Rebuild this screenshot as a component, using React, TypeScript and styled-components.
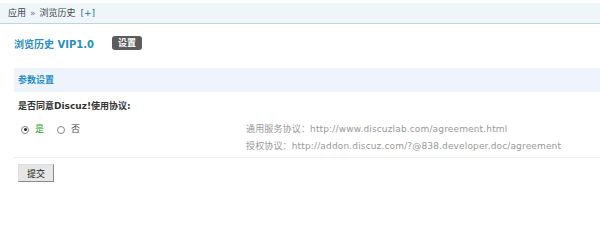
import React, { FC, useState } from 'react'
import styled, { createGlobalStyle } from 'styled-components'

const GlobalStyle = createGlobalStyle`
  body {
    margin: 0;
    background: #fff;
    font-family: "DejaVu Sans", Verdana, "Noto Sans CJK SC", sans-serif;
    font-size: 9px;
    color: #333;
  }
`

const Crumbs = styled.div`
  margin-top: 3px;
  height: 20px;
  line-height: 20px;
  padding-left: 8px;
  background: #eef6fa;
  border-bottom: 1px solid #bed5e1;
  color: #444;
`

const CrumbSep = styled.span`
  margin: 0 4px;
  color: #777;
`

const AddLink = styled.span`
  margin-left: 5px;
  color: #2b6f9a;
`

const TitleRow = styled.div`
  display: flex;
  align-items: center;
  padding: 12px 14px 0;
  height: 14px;
`

const Title = styled.h3`
  margin: 0;
  font-size: 10px;
  font-weight: bold;
  color: #2b8ec0;
`

const Badge = styled.span`
  margin-left: 18px;
  height: 14px;
  line-height: 14px;
  padding: 0 6px;
  border-radius: 3px;
  background: #5c5c5c;
  color: #fff;
  font-weight: bold;
`

const Form = styled.div`
  margin: 18px 0 0 14px;
`

const SectionHead = styled.div`
  height: 24px;
  line-height: 24px;
  padding-left: 4px;
  background: #eff4fc;
  color: #1f8fc6;
  font-weight: bold;
`

const Question = styled.div`
  height: 29px;
  line-height: 29px;
  padding-left: 4px;
  font-weight: bold;
  color: #333;
`

const OptionRow = styled.div`
  display: grid;
  grid-template-columns: 228px 1fr;
  padding: 0 0 2px 4px;
  border-bottom: 1px solid #efefef;
`

const Options = styled.div`
  display: flex;
  align-items: flex-start;
  padding-left: 3px;
  line-height: 17px;
`

const Option = styled.label`
  display: flex;
  align-items: center;
  margin-right: 13px;
  cursor: pointer;
`

const Dot = styled.span<{ $on: boolean }>`
  position: relative;
  width: 6px;
  height: 6px;
  border: 1px solid #888;
  border-radius: 50%;
  background: #fff;
  margin-right: 6px;
  &::after {
    content: '';
    display: ${p => (p.$on ? 'block' : 'none')};
    position: absolute;
    left: 1.5px;
    top: 1.5px;
    width: 3px;
    height: 3px;
    border-radius: 50%;
    background: #222;
  }
`

const OptionText = styled.span<{ $on: boolean }>`
  color: ${p => (p.$on ? '#1aa01a' : '#444')};
`

const Notes = styled.div`
  line-height: 17px;
  color: #999;
  letter-spacing: 0.15px;
`

const Submit = styled.button`
  margin: 6px 0 0 4px;
  width: 36px;
  height: 18px;
  padding: 0;
  font: inherit;
  color: #222;
  background: #e6e6e6;
  border: 1px solid;
  border-color: #ddd #888 #888 #ddd;
  cursor: pointer;
`

const App: FC = () => {
  const [agree, setAgree] = useState(true)

  return (
    <>
      <GlobalStyle />
      <Crumbs>
        应用<CrumbSep>»</CrumbSep>浏览历史<AddLink>[+]</AddLink>
      </Crumbs>
      <TitleRow>
        <Title>浏览历史 VIP1.0</Title>
        <Badge>设置</Badge>
      </TitleRow>
      <Form>
        <SectionHead>参数设置</SectionHead>
        <Question>是否同意Discuz!使用协议:</Question>
        <OptionRow>
          <Options>
            <Option onClick={() => setAgree(true)}>
              <Dot $on={agree} />
              <OptionText $on={agree}>是</OptionText>
            </Option>
            <Option onClick={() => setAgree(false)}>
              <Dot $on={!agree} />
              <OptionText $on={false}>否</OptionText>
            </Option>
          </Options>
          <Notes>
            <div>通用服务协议：http://www.discuzlab.com/agreement.html</div>
            <div>授权协议：http://addon.discuz.com/?@838.developer.doc/agreement</div>
          </Notes>
        </OptionRow>
        <Submit>提交</Submit>
      </Form>
    </>
  )
}

export default App
